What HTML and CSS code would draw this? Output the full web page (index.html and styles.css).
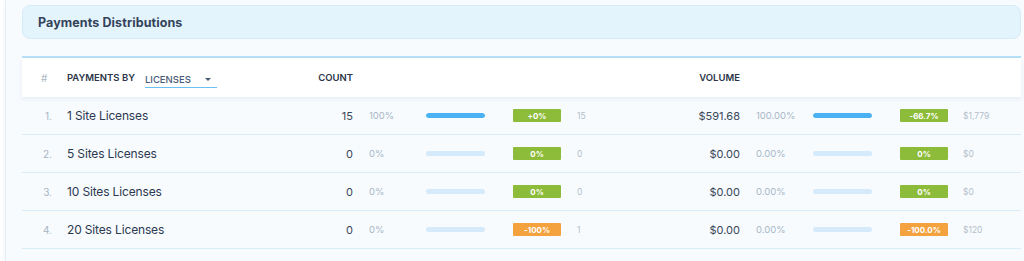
FILE: index.html
```html
<!DOCTYPE html>
<html>
<head>
<meta charset="utf-8">
<link rel="stylesheet" href="styles.css">
</head>
<body>
<div class="wrap">
  <div class="panel-head">
    <h2 class="panel-title">Payments Distributions</h2>
  </div>
  <div class="table">
    <div class="row head">
      <div class="c-num hash">#</div>
      <div class="c-name">
        <span class="by">PAYMENTS BY</span>
        <span class="select">LICENSES<span class="caret"></span></span>
      </div>
      <div class="c-count th">COUNT</div>
      <div></div><div></div><div></div><div></div>
      <div class="c-vol th">VOLUME</div>
      <div></div><div></div><div></div><div></div>
    </div>

    <div class="row">
      <div class="c-num">1.</div>
      <div class="c-name name">1 Site Licenses</div>
      <div class="c-count val">15</div>
      <div class="pct">100%</div>
      <div class="barcell"><div class="bar"><div class="fill" style="width:100%"></div></div></div>
      <div><span class="badge green">+0%</span></div>
      <div class="small">15</div>
      <div class="c-vol val">$591.68</div>
      <div class="pct">100.00%</div>
      <div class="barcell"><div class="bar"><div class="fill" style="width:100%"></div></div></div>
      <div><span class="badge green">-66.7%</span></div>
      <div class="small">$1,779</div>
    </div>

    <div class="row">
      <div class="c-num">2.</div>
      <div class="c-name name">5 Sites Licenses</div>
      <div class="c-count val">0</div>
      <div class="pct">0%</div>
      <div class="barcell"><div class="bar"></div></div>
      <div><span class="badge green">0%</span></div>
      <div class="small">0</div>
      <div class="c-vol val">$0.00</div>
      <div class="pct">0.00%</div>
      <div class="barcell"><div class="bar"></div></div>
      <div><span class="badge green">0%</span></div>
      <div class="small">$0</div>
    </div>

    <div class="row">
      <div class="c-num">3.</div>
      <div class="c-name name">10 Sites Licenses</div>
      <div class="c-count val">0</div>
      <div class="pct">0%</div>
      <div class="barcell"><div class="bar"></div></div>
      <div><span class="badge green">0%</span></div>
      <div class="small">0</div>
      <div class="c-vol val">$0.00</div>
      <div class="pct">0.00%</div>
      <div class="barcell"><div class="bar"></div></div>
      <div><span class="badge green">0%</span></div>
      <div class="small">$0</div>
    </div>

    <div class="row">
      <div class="c-num">4.</div>
      <div class="c-name name">20 Sites Licenses</div>
      <div class="c-count val">0</div>
      <div class="pct">0%</div>
      <div class="barcell"><div class="bar"></div></div>
      <div><span class="badge orange">-100%</span></div>
      <div class="small">1</div>
      <div class="c-vol val">$0.00</div>
      <div class="pct">0.00%</div>
      <div class="barcell"><div class="bar"></div></div>
      <div><span class="badge orange">-100.0%</span></div>
      <div class="small">$120</div>
    </div>
  </div>
</div>
</body>
</html>
```
FILE: styles.css
```css
* { box-sizing: border-box; }
html, body { margin: 0; padding: 0; background: #ffffff; }
body {
  font-family: Inter, "Noto Sans", "DejaVu Sans", sans-serif;
  color: #2f3b4d;
  height: 261px;
  overflow: hidden;
  padding-left: 5px;
}
.wrap {
  background: #f7fbfe;
  border-left: 1px solid #e6eef5;
  box-shadow: -1px 0 3px rgba(30, 70, 110, 0.05);
  padding: 5px 3px 0 16px;
  height: 261px;
}
.panel-head {
  height: 34px;
  background: #e3f4fd;
  border: 1px solid #d6ebf8;
  border-radius: 8px;
  display: flex;
  align-items: center;
  padding-left: 15px;
  margin-bottom: 17px;
}
.panel-title {
  margin: 0;
  font-size: 12.5px;
  font-weight: 700;
  color: #34435a;
  letter-spacing: 0.1px;
}
.table {
  border-top: 2px solid #b5e0f8;
}
.row {
  display: grid;
  grid-template-columns: 30px 248px 53px 73px 87px 64px 103px 60px 73px 87px 63px 1fr;
  align-items: center;
  height: 38px;
  border-bottom: 1px solid #d9ecfa;
}
.row.head {
  height: 39px;
  background: #ffffff;
  border-bottom: none;
  box-shadow: 0 2px 4px rgba(20, 60, 100, 0.07);
  position: relative;
}
.c-num {
  text-align: right;
  font-size: 10px;
  color: #a9b5c3;
}
.c-num.hash {
  text-align: left;
  padding-left: 19px;
  color: #adb8c5;
  font-size: 10px;
}
.c-name {
  padding-left: 15px;
  display: flex;
  align-items: center;
}
.name {
  font-size: 12px;
  letter-spacing: -0.15px;
  color: #2c3850;
}
.by {
  font-size: 9.5px;
  font-weight: 600;
  color: #2b3547;
  letter-spacing: 0;
}
.select {
  margin-left: 10px;
  width: 72px;
  display: flex;
  align-items: center;
  justify-content: space-between;
  font-size: 9.5px;
  font-weight: 500;
  color: #4a5b78;
  padding: 2px 6px 2px 0;
  border-bottom: 1.5px solid #6cc0f2;
  margin-top: 5px;
}
.caret {
  width: 0;
  height: 0;
  border-left: 3px solid transparent;
  border-right: 3px solid transparent;
  border-top: 3.5px solid #4a5b78;
}
.th {
  font-size: 9.5px;
  font-weight: 600;
  color: #2b3547;
  text-align: right;
}
.val {
  text-align: right;
  font-size: 11px;
  color: #3a4659;
}
.pct {
  padding-left: 16px;
  font-size: 9.5px;
  color: #a8b7c7;
}
.bar {
  width: 59px;
  height: 5px;
  border-radius: 3px;
  background: #d5eafb;
  overflow: hidden;
}
.fill {
  height: 100%;
  background: #4ab2f3;
  border-radius: 3px;
}
.badge {
  display: flex;
  align-items: center;
  justify-content: center;
  width: 48px;
  height: 13px;
  border-radius: 1px;
  color: #ffffff;
  font-size: 8px;
  font-weight: 700;
}
.badge.green { background: #8dbb3a; }
.badge.orange { background: #f4a23d; }
.small {
  font-size: 8.5px;
  color: #b4bfcb;
}
```
